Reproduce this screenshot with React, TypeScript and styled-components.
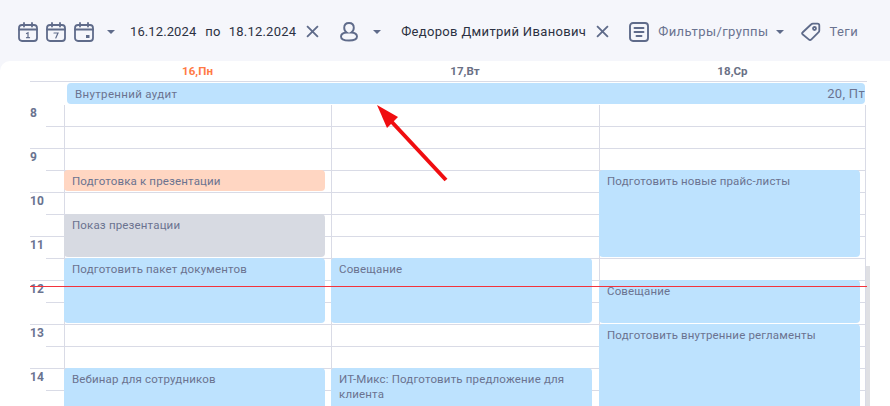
import React from "react";
import styled, { createGlobalStyle } from "styled-components";

const Global = createGlobalStyle`
  html, body { margin: 0; padding: 0; background: #f5f6fb; }
  body { width: 890px; height: 406px; overflow: hidden; font-family: "Roboto", "Liberation Sans", sans-serif; }
`;

const Page = styled.div`
  position: relative;
  width: 890px;
  height: 406px;
  overflow: hidden;
  display: flex;
  flex-direction: column;
`;

const Toolbar = styled.div`
  height: 61px;
  flex: none;
  display: flex;
  align-items: center;
  padding: 2px 0 0 18px;
  box-sizing: border-box;
  color: #2c3142;
  font-size: 13px;
`;

const IconGroup = styled.div`
  display: flex;
  gap: 8px;
  color: #5f6b8a;
`;

const Caret = styled.span<{ $ml: number }>`
  width: 0;
  height: 0;
  margin-left: ${(p) => p.$ml}px;
  border-left: 4px solid transparent;
  border-right: 4px solid transparent;
  border-top: 4px solid #5f6b8a;
`;

const ToolText = styled.span<{ $ml: number; $muted?: boolean; $track?: number }>`
  margin-left: ${(p) => p.$ml}px;
  white-space: nowrap;
  letter-spacing: ${(p) => p.$track ?? 0.1}px;
  color: ${(p) => (p.$muted ? "#6a7390" : "inherit")};
`;

const ToolIcon = styled.svg<{ $ml: number }>`
  flex: none;
  margin-left: ${(p) => p.$ml}px;
  color: #5f6b8a;
`;

const Panel = styled.div`
  flex: 1;
  background: #fff;
  border-top-left-radius: 10px;
  min-height: 0;
`;

const DayHeader = styled.div`
  display: grid;
  grid-template-columns: 34px 267px 268px 267px;
  margin-left: 30px;
  width: 837px;
  height: 20px;
  border-bottom: 1px solid #d9dbe6;
  box-sizing: content-box;
`;

const DayLabel = styled.div<{ $col: number; $today?: boolean }>`
  grid-column: ${(p) => p.$col};
  text-align: center;
  font-size: 11.5px;
  font-weight: 700;
  line-height: 20px;
  letter-spacing: 0.05px;
  color: ${(p) => (p.$today ? "#ff7a45" : "#6a7085")};
`;

const AllDay = styled.div`
  margin: 1px 0 1px 67px;
  width: 798px;
  height: 21px;
  display: flex;
  justify-content: space-between;
  align-items: center;
  padding: 0 0 0 8px;
  box-sizing: border-box;
  background: #bde2fe;
  border-radius: 4px;
  color: #6b7390;
  font-size: 11.5px;
  letter-spacing: 0.33px;
`;

const AllDayEnd = styled.span`
  font-size: 13px;
  letter-spacing: 0.3px;
`;

const TimeGrid = styled.div`
  display: grid;
  grid-template-columns: 16px 18px 267px 268px 267px;
  grid-auto-rows: 22px;
  margin-left: 30px;
  width: 837px;
`;

const HalfCell = styled.div<{ $row: number; $hour: boolean }>`
  grid-column: ${(p) => (p.$hour ? "1 / -1" : "2 / -1")};
  grid-row: ${(p) => p.$row};
  border-bottom: 1px solid #d9dbe6;
  margin-top: -1px;
`;

const VLine = styled.div<{ $col: number }>`
  grid-column: ${(p) => p.$col};
  grid-row: 1 / 15;
  border-left: 1px solid #d9dbe6;
`;

const EndLine = styled.div`
  grid-column: 5;
  grid-row: 1 / 15;
  border-right: 1px solid #d9dbe6;
`;

const Hour = styled.div<{ $row: number }>`
  grid-column: 1 / 3;
  grid-row: ${(p) => p.$row};
  font-size: 12px;
  font-weight: 700;
  line-height: 16px;
  color: #6a7390;
`;

const Event = styled.div<{ $col: number; $start: number; $span: number; $bg: string }>`
  grid-column: ${(p) => p.$col};
  grid-row: ${(p) => p.$start} / span ${(p) => p.$span};
  background: ${(p) => p.$bg};
  margin: -1px ${(p) => (p.$col === 4 ? 7 : 6)}px 2px 0;
  padding: 4px 8px 0;
  border-radius: 4px;
  box-sizing: border-box;
  color: #6b7390;
  font-size: 11.5px;
  line-height: 15px;
  letter-spacing: 0.16px;
  overflow: hidden;
  min-height: 0;
`;

const NowLine = styled.div`
  position: absolute;
  left: 30px;
  top: 286px;
  width: 837px;
  height: 1px;
  background: #f4333c;
`;

const ScrollThumb = styled.div`
  position: absolute;
  left: 866px;
  top: 266px;
  width: 4px;
  height: 140px;
  background: #dfe0e4;
`;

const Arrow = styled.svg`
  position: absolute;
  left: 370px;
  top: 98px;
`;

const BLUE = "#bde2fe";
const PEACH = "#ffd6c2";
const GREY = "#d7dae2";

const Cal = ({ children }: { children: React.ReactNode }) => (
  <svg width="20" height="20" viewBox="0 0 20 20" fill="none" stroke="currentColor" strokeWidth="1.8" strokeLinecap="round">
    <rect x="1" y="3" width="18" height="16" rx="3" />
    <path d="M1 7.500h18M6 1v3.500M14 1v3.500" />
    {children}
  </svg>
);

const events: { col: number; start: number; span: number; bg: string; text: string }[] = [
  { col: 3, start: 4, span: 1, bg: PEACH, text: "Подготовка к презентации" },
  { col: 3, start: 6, span: 2, bg: GREY, text: "Показ презентации" },
  { col: 3, start: 8, span: 3, bg: BLUE, text: "Подготовить пакет документов" },
  { col: 3, start: 13, span: 2, bg: BLUE, text: "Вебинар для сотрудников" },
  { col: 4, start: 8, span: 3, bg: BLUE, text: "Совещание" },
  { col: 4, start: 13, span: 2, bg: BLUE, text: "ИТ-Микс: Подготовить предложение для клиента" },
  { col: 5, start: 4, span: 4, bg: BLUE, text: "Подготовить новые прайс-листы" },
  { col: 5, start: 9, span: 2, bg: BLUE, text: "Совещание" },
  { col: 5, start: 11, span: 4, bg: BLUE, text: "Подготовить внутренние регламенты" },
];

export default function App() {
  return (
    <Page>
      <Global />
      <Toolbar>
        <IconGroup>
          <Cal><path d="M8.500 11.500l1.500-.8v5M8.500 15.700h3" strokeWidth="1.2" /></Cal>
          <Cal><path d="M8 11h4l-2.200 5" strokeWidth="1.2" /></Cal>
          <Cal><rect x="12" y="13" width="3.500" height="3" fill="currentColor" stroke="none" /></Cal>
        </IconGroup>
        <Caret $ml={13} />
        <ToolText $ml={15}>16.12.2024</ToolText>
        <ToolText $ml={9} $track={0.3}>по</ToolText>
        <ToolText $ml={8} $track={0.2}>18.12.2024</ToolText>
        <ToolIcon $ml={10} width="13" height="13" viewBox="0 0 12 12" fill="none" stroke="currentColor" strokeWidth="1.7">
          <path d="M1 1l10 10M11 1L1 11" />
        </ToolIcon>
        <ToolIcon $ml={21} width="18" height="20" viewBox="0 0 18 20" fill="none" stroke="currentColor" strokeWidth="1.9">
          <path d="M9 1c3 0 4.800 2 4.800 4.800 0 2.200-1 3.800-2.500 4.700 3.400.3 5.700 1.700 5.700 4 0 2.800-3 4-8 4s-8-1.200-8-4c0-2.300 2.300-3.700 5.700-4C5.200 9.600 4.200 8 4.200 5.800 4.200 3 6 1 9 1z" />
        </ToolIcon>
        <Caret $ml={15} />
        <ToolText $ml={20} $track={0.34}>Федоров Дмитрий Иванович</ToolText>
        <ToolIcon $ml={10} width="13" height="13" viewBox="0 0 12 12" fill="none" stroke="currentColor" strokeWidth="1.7">
          <path d="M1 1l10 10M11 1L1 11" />
        </ToolIcon>
        <ToolIcon $ml={20} width="20" height="20" viewBox="0 0 20 20" fill="none" stroke="currentColor" strokeWidth="1.9" strokeLinecap="round">
          <rect x="1" y="1" width="18" height="18" rx="3" />
          <path d="M5.500 6h9M5.500 10h9M7.500 14h5" />
        </ToolIcon>
        <ToolText $ml={9} $muted $track={0.4}>Фильтры/группы</ToolText>
        <Caret $ml={7} />
        <ToolIcon $ml={17} width="20" height="20" viewBox="0 0 20 20" fill="none" stroke="currentColor" strokeWidth="1.800" strokeLinejoin="round">
          <path d="M1.500 10.500L10 2.500c.6-.6 1.200-.9 2-.9h4.500c1 0 1.800.8 1.800 1.800v5c0 .8-.3 1.400-.9 2l-7 7c-.8.8-1.900.8-2.700 0l-6.200-5.200c-.6-.5-.6-1.200 0-1.700z" />
          <circle cx="13.500" cy="6.500" r="1.500" />
        </ToolIcon>
        <ToolText $ml={9} $muted $track={0.4}>Теги</ToolText>
      </Toolbar>
      <Panel>
        <DayHeader>
          <DayLabel $col={2} $today>16,Пн</DayLabel>
          <DayLabel $col={3}>17,Вт</DayLabel>
          <DayLabel $col={4}>18,Ср</DayLabel>
        </DayHeader>
        <AllDay>
          <span>Внутренний аудит</span>
          <AllDayEnd>20, Пт</AllDayEnd>
        </AllDay>
        <TimeGrid>
          {Array.from({ length: 14 }, (_, i) => (
            <HalfCell key={i} $row={i + 1} $hour={i % 2 === 1} />
          ))}
          <VLine $col={3} />
          <VLine $col={4} />
          <VLine $col={5} />
          <EndLine />
          {[8, 9, 10, 11, 12, 13, 14].map((h, i) => (
            <Hour key={h} $row={i * 2 + 1}>{h}</Hour>
          ))}
          {events.map((e) => (
            <Event key={e.text + e.col} $col={e.col} $start={e.start} $span={e.span} $bg={e.bg}>{e.text}</Event>
          ))}
        </TimeGrid>
      </Panel>
      <ScrollThumb />
      <NowLine />
      <Arrow width="90" height="90" viewBox="0 0 90 90" fill="none">
        <path d="M76 82L20 22" stroke="#f00d10" strokeWidth="4" />
        <path d="M7 7L28 19L17 30z" fill="#f00d10" />
      </Arrow>
    </Page>
  );
}
